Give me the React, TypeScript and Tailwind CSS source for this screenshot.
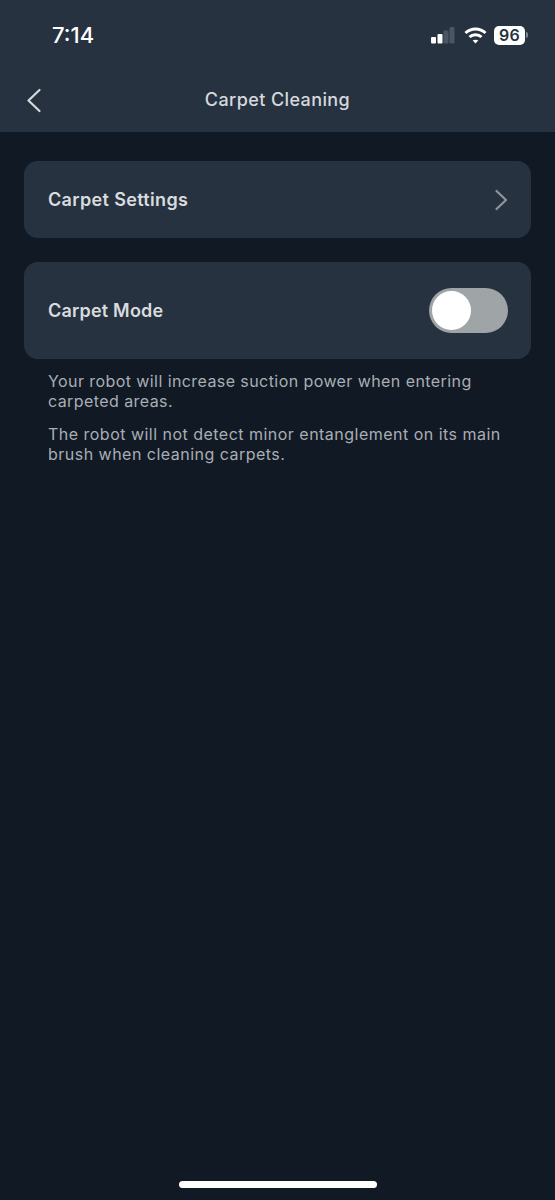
export default function App() {
  return (
    <div className="flex h-[1200px] w-[555px] flex-col overflow-hidden bg-[#111924] font-['Inter',sans-serif]">
      <header className="h-[132px] shrink-0 bg-[#273240]">
        <div className="flex h-[70px] items-center justify-between pl-[52px] pr-[27px]">
          <span className="text-[22px] font-medium leading-none text-white">7:14</span>
          <div className="flex items-center">
            <svg width="24" height="17" viewBox="0 0 24 17">
              <rect x="0" y="10" width="5" height="6.5" rx="1" fill="#fff" />
              <rect x="6.5" y="7" width="5" height="9.5" rx="1" fill="#fff" />
              <rect x="12.5" y="3.5" width="5" height="13" rx="1" fill="#4b5662" />
              <rect x="18.5" y="0" width="5" height="16.5" rx="1" fill="#4b5662" />
            </svg>
            <svg className="ml-[9px]" width="23" height="17" viewBox="0 0 23 17" fill="none" stroke="#fff" strokeWidth="3">
              <path d="M1.5 6 C7 0.5 16 0.5 21.5 6" />
              <path d="M5.5 10 C8.5 7 14.5 7 17.5 10" />
              <path d="M11.5 16.5 L8.7 13.6 C10 12.4 13 12.4 14.3 13.6 Z" fill="#fff" stroke="none" />
            </svg>
            <div className="ml-[7px] flex items-center gap-[1px]">
              <div className="flex h-[19px] w-[31px] items-center justify-center rounded-[5px] bg-white text-[16px] font-semibold leading-none tracking-[0.3px] text-[#273240]">96</div>
              <div className="h-[6px] w-[2px] rounded-r-full bg-[#7c8590]" />
            </div>
          </div>
        </div>
        <div className="relative flex h-[60px] items-center justify-center">
          <svg className="absolute left-[26px] top-[17px]" width="16" height="26" viewBox="0 0 16 26" fill="none" stroke="#d5d9dd" strokeWidth="2.2" strokeLinecap="round" strokeLinejoin="round">
            <path d="M13.5 3 L2.5 13.5 L13.5 24" />
          </svg>
          <h1 className="text-[18px] font-medium leading-none tracking-[0.4px] text-[#d5d9dd]">Carpet Cleaning</h1>
        </div>
      </header>

      <main className="flex flex-col px-6 pt-[29px]">
        <div className="flex h-[77px] items-center justify-between rounded-[14px] bg-[#273240] pl-6 pr-[23px]">
          <span className="text-[18px] font-semibold tracking-[0.35px] text-[#d9dcdf]">Carpet Settings</span>
          <svg width="14" height="22" viewBox="0 0 14 22" fill="none" stroke="#8f959c" strokeWidth="2.2" strokeLinecap="round" strokeLinejoin="round">
            <path d="M2.5 2 L12 11 L2.5 20" />
          </svg>
        </div>
        <div className="mt-6 flex h-[97px] items-center justify-between rounded-[14px] bg-[#273240] pl-6 pr-[23px]">
          <span className="text-[18px] font-semibold tracking-[0.2px] text-[#d9dcdf]">Carpet Mode</span>
          <div className="flex h-[45px] w-[79px] items-center rounded-full bg-[#9fa4a6] pl-[3px]">
            <div className="h-[39px] w-[39px] rounded-full bg-white" />
          </div>
        </div>
        <div className="flex flex-col gap-[13px] px-6 pt-[12px] text-[16px] leading-[20px] text-[#a9aeb4]">
          <p className="tracking-[0.42px]">Your robot will increase suction power when entering carpeted areas.</p>
          <p className="tracking-[0.48px]">The robot will not detect minor entanglement on its main brush when cleaning carpets.</p>
        </div>
      </main>

      <div className="mt-auto flex justify-center pb-[12px]">
        <div className="h-[7px] w-[198px] rounded-full bg-white" />
      </div>
    </div>
  );
}
